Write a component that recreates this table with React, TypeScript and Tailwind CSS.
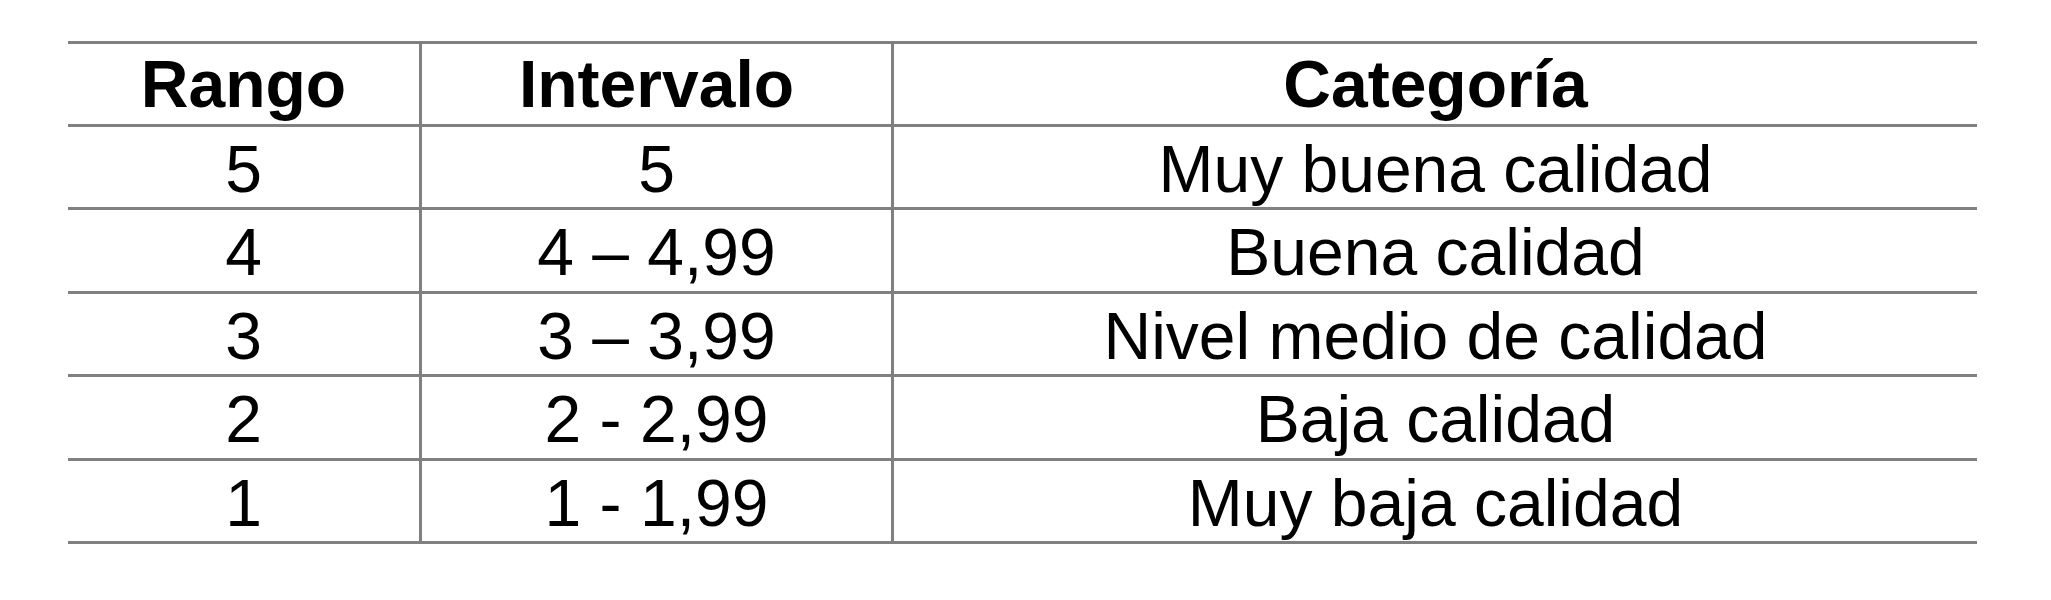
const rows = [
  { rango: "5", intervalo: "5", categoria: "Muy buena calidad", h: "h-[83px]" },
  { rango: "4", intervalo: "4 – 4,99", categoria: "Buena calidad", h: "h-[84px]" },
  { rango: "3", intervalo: "3 – 3,99", categoria: "Nivel medio de calidad", h: "h-[83px]" },
  { rango: "2", intervalo: "2 - 2,99", categoria: "Baja calidad", h: "h-[84px]" },
  { rango: "1", intervalo: "1 - 1,99", categoria: "Muy baja calidad", h: "h-[83px]" },
];

function App(): JSX.Element {
  return (
    <div className="h-[600px] w-[2051px] bg-white pl-[68px] pt-[41px] text-black font-['Liberation_Sans',Arial,sans-serif]">
      <div className="w-[1909px] border-b-[3px] border-[#808080] text-[66px]">
        {/* header */}
        <div className="grid h-[83px] grid-cols-[351px_472px_1086px] border-t-[3px] border-[#808080] font-bold">
          <div className="flex items-center justify-center leading-none">Rango</div>
          <div className="flex items-center justify-center border-l-[3px] border-[#808080] leading-none">Intervalo</div>
          <div className="flex items-center justify-center border-l-[3px] border-[#808080] leading-none">Categoría</div>
        </div>
        {rows.map((row) => (
          <div
            key={row.rango}
            className={`grid ${row.h} grid-cols-[351px_472px_1086px] border-t-[3px] border-[#808080]`}
          >
            <div className="flex items-center justify-center pt-[3px] leading-none">{row.rango}</div>
            <div className="flex items-center justify-center border-l-[3px] border-[#808080] pt-[3px] leading-none">
              {row.intervalo}
            </div>
            <div className="flex items-center justify-center border-l-[3px] border-[#808080] pt-[3px] leading-none">
              {row.categoria}
            </div>
          </div>
        ))}
      </div>
    </div>
  );
}

export default App;
